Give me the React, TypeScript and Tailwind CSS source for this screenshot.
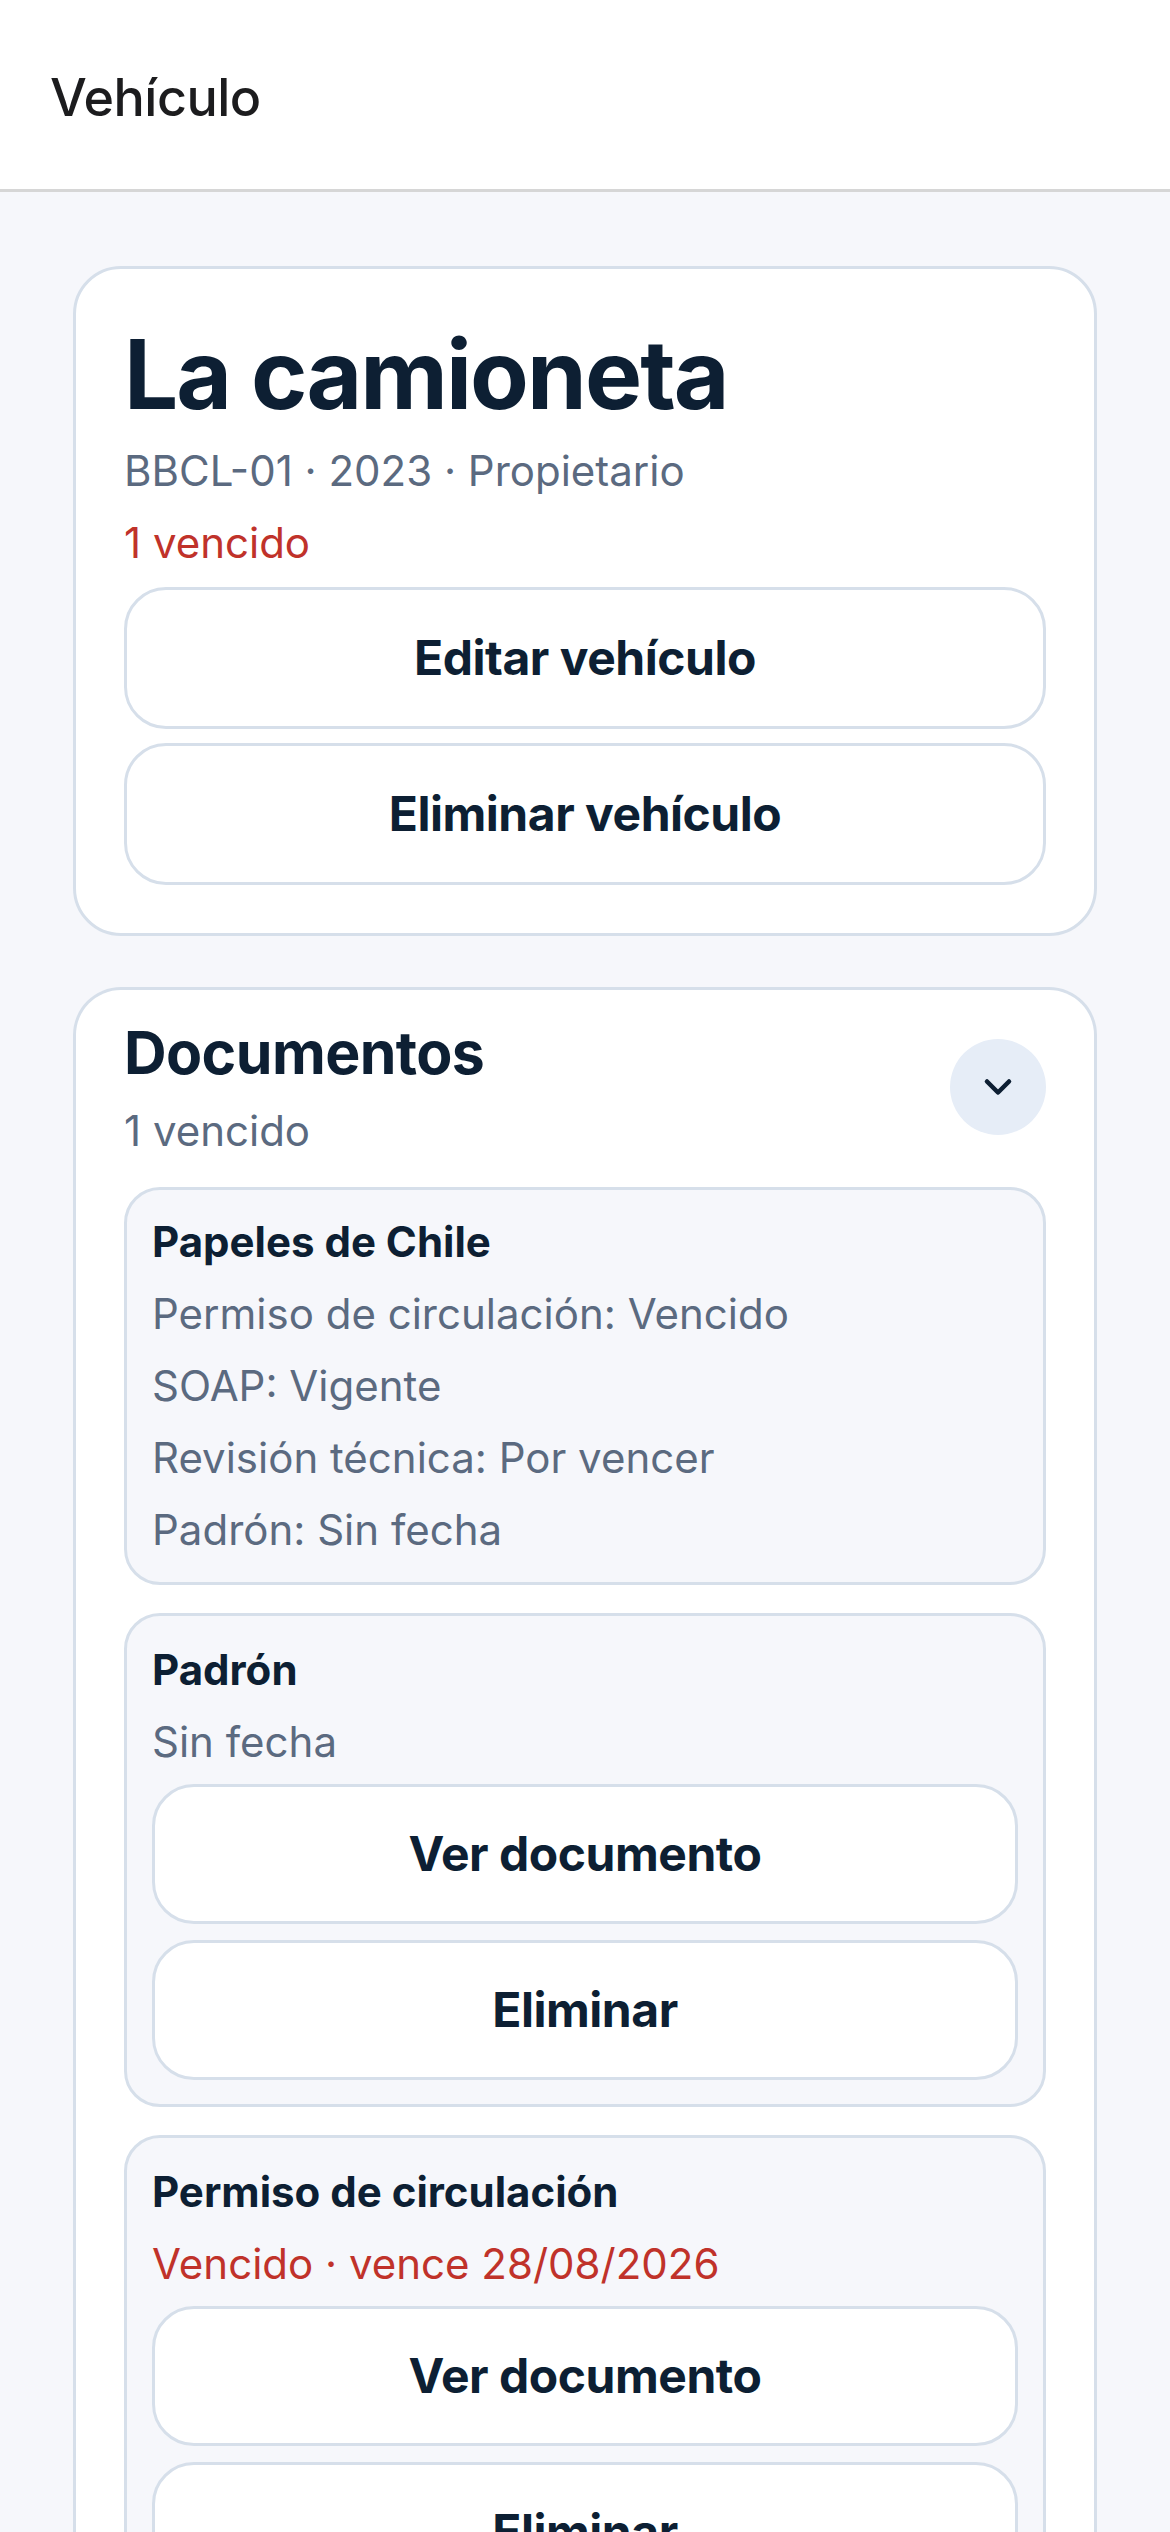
import { ChevronDown } from 'lucide-react'

type DocItem = { title: string; status: string; overdue?: boolean }

const docs: DocItem[] = [
	{ title: 'Padrón', status: 'Sin fecha' },
	{ title: 'Permiso de circulación', status: 'Vencido · vence 28/08/2026', overdue: true },
]

const chileStatus = [
	'Permiso de circulación: Vencido',
	'SOAP: Vigente',
	'Revisión técnica: Por vencer',
	'Padrón: Sin fecha',
]

function ActionButton({ label, tall }: { label: string; tall?: boolean }) {
	return (
		<button
			className={`${tall ? 'h-[142px]' : 'h-[140px]'} w-full rounded-[42px] border-[3px] border-[#d6dfea] bg-white text-[48px] font-bold tracking-[-0.01em] text-[#0d1f33]`}
		>
			{label}
		</button>
	)
}

export default function App() {
	return (
		<div className="min-h-[2532px] bg-[#f6f7fb] font-[Inter,sans-serif]">
			<header className="flex h-[192px] items-center border-b-[3px] border-[#d6d6d6] bg-white px-[50px] pt-[6px]">
				<h1 className="text-[52px] font-medium tracking-[-0.01em] text-[#1c1c1e]">Vehículo</h1>
			</header>

			<main className="flex flex-col gap-[51px] px-[73px] pt-[74px]">
				{/* vehicle summary */}
				<section className="flex flex-col rounded-[48px] border-[3px] border-[#d6dfea] bg-white p-[48px]">
					<h2 className="text-[96px] leading-[114px] font-bold tracking-[-0.02em] text-[#0d1f33]">La camioneta</h2>
					<p className="mt-[10px] text-[42px] leading-[60px] text-[#5b6a80]">BBCL-01 · 2023 · Propietario</p>
					<p className="mt-[12px] text-[42px] leading-[60px] text-[#c0322a]">1 vencido</p>
					<div className="mt-[14px] flex flex-col gap-[14px]">
						<ActionButton label="Editar vehículo" tall />
						<ActionButton label="Eliminar vehículo" tall />
					</div>
				</section>

				{/* documents */}
				<section className="flex flex-col rounded-t-[48px] border-[3px] border-b-0 border-[#d6dfea] bg-white px-[48px] pt-[29px]">
					<div className="flex items-start justify-between">
						<div className="flex flex-col">
							<h2 className="text-[59px] leading-[68px] font-bold tracking-[-0.01em] text-[#0d1f33]">Documentos</h2>
							<p className="mt-[14px] text-[42px] leading-[60px] text-[#5b6a80]">1 vencido</p>
						</div>
						<button className="mt-[20px] flex h-[96px] w-[96px] items-center justify-center rounded-full bg-[#e6edf7] text-[#0d1f33]">
							<ChevronDown size={44} strokeWidth={2.5} />
						</button>
					</div>

					<div className="mt-[26px] flex flex-col gap-[28px]">
						<div className="flex flex-col gap-[12px] rounded-[36px] border-[3px] border-[#d6dfea] bg-[#f6f7fb] px-[25px] py-[22px]">
							<h3 className="text-[42px] leading-[60px] font-bold text-[#0d1f33]">Papeles de Chile</h3>
							{chileStatus.map((s) => (
								<p key={s} className="text-[42px] leading-[60px] text-[#5b6a80]">{s}</p>
							))}
						</div>

						{docs.map((d) => (
							<div key={d.title} className="flex flex-col rounded-[36px] border-[3px] border-[#d6dfea] bg-[#f6f7fb] px-[25px] py-[24px]">
								<h3 className="text-[42px] leading-[60px] font-bold text-[#0d1f33]">{d.title}</h3>
								<p className={`mt-[12px] text-[42px] leading-[60px] ${d.overdue ? 'text-[#c0322a]' : 'text-[#5b6a80]'}`}>{d.status}</p>
								<div className="mt-[12px] flex flex-col gap-[16px]">
									<ActionButton label="Ver documento" />
									<ActionButton label="Eliminar" />
								</div>
							</div>
						))}
					</div>
				</section>
			</main>
		</div>
	)
}
